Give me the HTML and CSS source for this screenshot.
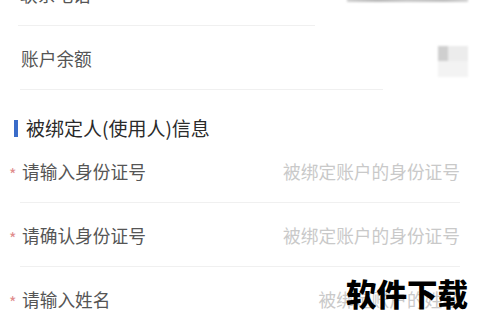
FILE: index.html
```html
<!DOCTYPE html>
<html lang="zh-CN">
<head>
<meta charset="utf-8">
<link rel="stylesheet" href="styles.css">
</head>
<body>
<div class="page">
  <div class="info-row row-phone">
    <span class="label">联系电话</span>
    <span class="blur blur-phone"></span>
  </div>
  <div class="info-row row-balance">
    <span class="label">账户余额</span>
    <span class="blur blur-balance"><i class="b1"></i><i class="b2"></i><i class="b3"></i></span>
  </div>
  <div class="section-title"><span class="bar"></span>被绑定人(使用人)信息</div>
  <div class="form-row">
    <span class="star">*</span><span class="label">请输入身份证号</span>
    <span class="placeholder">被绑定账户的身份证号</span>
  </div>
  <div class="form-row">
    <span class="star">*</span><span class="label">请确认身份证号</span>
    <span class="placeholder">被绑定账户的身份证号</span>
  </div>
  <div class="form-row last">
    <span class="star">*</span><span class="label">请输入姓名</span>
    <span class="placeholder">被绑定账户的姓名</span>
  </div>
  <div class="watermark">软件下载</div>
</div>
</body>
</html>
```
FILE: styles.css
```css
html, body {
  margin: 0;
  padding: 0;
  background: #ffffff;
  width: 480px;
  height: 320px;
  overflow: hidden;
}
.page {
  position: relative;
  width: 480px;
  height: 320px;
  overflow: hidden;
  font-family: "Noto Sans CJK SC", "Noto Sans", sans-serif;
  font-size: 17.7px;
}
.page > .info-row:first-child {
  margin-top: -38px;
}
.info-row {
  height: 63px;
  display: flex;
  align-items: center;
  justify-content: space-between;
  position: relative;
}
.row-phone {
  margin: 0 165px 0 18px;
  border-bottom: 1px solid #f0f0f0;
  padding-left: 2px;
}
.row-balance {
  margin: 0 97px 0 20px;
  border-bottom: 1px solid #f0f0f0;
  padding-left: 1px;
}
.label {
  color: #555555;
  line-height: 20px;
}
.blur {
  position: absolute;
  filter: blur(0.8px);
}
.blur-phone {
  left: 329px;
  bottom: 23px;
  width: 121px;
  height: 4px;
  background: linear-gradient(90deg, #cfcfcf, #b8b8b8 25%, #c8c8c8 50%, #bdbdbd 80%, #d4d4d4);
}
.blur-balance {
  left: 418px;
  top: 20px;
  width: 30px;
  height: 31px;
  display: grid;
  grid-template-columns: 10px 20px;
  grid-template-rows: 15px 16px;
}
.blur-balance .b1 { background: #cfcfcf; }
.blur-balance .b2 { background: #ececec; }
.blur-balance .b3 { grid-column: 1 / 3; background: #f3f3f3; }
.section-title {
  display: flex;
  align-items: center;
  height: 49px;
  padding: 28px 0 1px 14px;
  box-sizing: border-box;
  color: #2a2a2a;
  font-size: 19px;
  line-height: 20px;
}
.bar {
  width: 4px;
  height: 17px;
  background: #3a6cc9;
  margin-right: 8px;
}
.form-row {
  height: 63px;
  margin: 0 20px;
  border-bottom: 1px solid #f0f0f0;
  display: flex;
  align-items: center;
  position: relative;
}
.form-row.last {
  border-bottom: none;
}
.star {
  position: absolute;
  left: -11px;
  top: 27px;
  color: #e08c8c;
  font-size: 16px;
  line-height: 16px;
}
.form-row .label {
  margin-left: 2px;
}
.placeholder {
  margin-left: auto;
  color: #c9c9c9;
  line-height: 20px;
}
.watermark {
  position: absolute;
  left: 346px;
  top: 275px;
  font-size: 30.5px;
  font-weight: 900;
  color: #000000;
  line-height: 36px;
}
```
